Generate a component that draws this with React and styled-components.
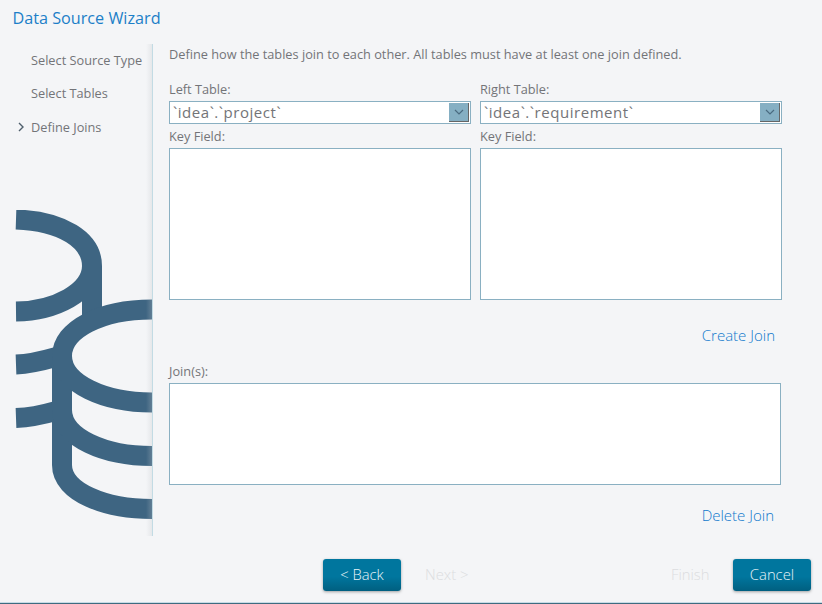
import React from "react";
import styled, { createGlobalStyle } from "styled-components";

const Global = createGlobalStyle`
  html, body { margin: 0; padding: 0; width: 822px; height: 604px; overflow: hidden; background: #f4f5f7; }
  * { box-sizing: border-box; }
`;

const Dialog = styled.div`
  position: relative;
  width: 822px;
  height: 604px;
  background: #f4f5f7;
  font-family: "Open Sans", sans-serif;
  color: #737478;
  font-size: 12.75px;
  display: flex;
  flex-direction: column;
  overflow: hidden;
`;

const Title = styled.h1`
  margin: 0;
  height: 44px;
  padding: 7px 0 0 12.5px;
  font-size: 16.2px;
  line-height: 22px;
  font-weight: 400;
  color: #1c7fc8;
`;

const Body = styled.div`
  display: flex;
  height: 492px;
  flex: none;
`;

const Side = styled.aside`
  position: relative;
  width: 153px;
  flex: none;
  overflow: hidden;
  border-right: 1px solid #c2dbe4;
  &::after {
    content: "";
    position: absolute;
    top: 0;
    right: 0;
    bottom: 0;
    width: 6px;
    background: linear-gradient(to right, rgba(190, 195, 200, 0), rgba(190, 195, 200, 0.28));
  }
`;

const Steps = styled.ul`
  list-style: none;
  margin: 0;
  padding: 4.6px 0 0 31px;
`;

const Step = styled.li`
  position: relative;
  height: 33.5px;
  line-height: 22px;
  white-space: nowrap;
`;

const Caret = styled.svg`
  position: absolute;
  left: -14px;
  top: 6px;
  width: 8px;
  height: 10px;
`;

const Art = styled.svg`
  position: absolute;
  left: 0;
  top: 166px;
  width: 152px;
  height: 310px;
`;

const Main = styled.main`
  flex: 1;
  padding: 0 40px 0 16px;
  display: flex;
  flex-direction: column;
`;

const Intro = styled.p`
  margin: 0;
  height: 36px;
  line-height: 20px;
  white-space: nowrap;
`;

const Columns = styled.div`
  display: grid;
  grid-template-columns: 302px 302px;
  column-gap: 9px;
`;

const Column = styled.div`
  display: flex;
  flex-direction: column;
`;

const Label = styled.label`
  height: 21px;
  line-height: 18px;
  white-space: nowrap;
`;

const Select = styled.div`
  height: 23px;
  background: #fff;
  border: 1px solid #8ab0c2;
  display: flex;
  align-items: center;
  justify-content: space-between;
  padding: 0 1px 0 3px;
  font-size: 15px;
  letter-spacing: 0.55px;
  line-height: 19px;
  color: #737478;
  margin-bottom: 3px;
`;

const Arrow = styled.span`
  width: 20px;
  height: 19px;
  background: #85afc3;
  border-right: 1px solid #666;
  border-bottom: 1px solid #666;
  display: flex;
  align-items: center;
  justify-content: center;
`;

const ListBox = styled.div`
  height: 152px;
  background: #fff;
  border: 1px solid #8ab0c2;
`;

const LinkRow = styled.div`
  height: ${(p) => p.$h}px;
  display: flex;
  align-items: flex-start;
  justify-content: flex-end;
  padding-top: ${(p) => p.$top}px;
  padding-right: ${(p) => p.$pad}px;
`;

const Action = styled.a`
  font-size: 15px;
  font-weight: 300;
  color: #0f78cc;
  line-height: 20px;
`;

const JoinLabel = styled(Label)`
  height: 22px;
  line-height: 20px;
  display: block;
`;

const JoinBox = styled.div`
  width: 612px;
  height: 102px;
  flex: none;
  background: #fff;
  border: 1px solid #8ab0c2;
`;

const Footer = styled.footer`
  flex: 1;
  display: flex;
  align-items: flex-start;
  padding: 23px 11px 0 323px;
  border-bottom: 1px solid #3f6c80;
  box-shadow: inset 0 -1px 0 #c8dbe6;
`;

const Primary = styled.button`
  width: 78px;
  height: 32px;
  border: 0;
  border-radius: 3px;
  background: linear-gradient(#00769e 0 55%, #005f80 100%);
  box-shadow: 0 1px 3px rgba(0, 0, 0, 0.35);
  color: #e8f4f8;
  font: 300 14.8px "Open Sans", sans-serif;
  padding: 0 0 2px;
`;

const Ghost = styled.button`
  border: 0;
  background: none;
  color: #dcdde0;
  font: 300 14.8px "Open Sans", sans-serif;
  height: 32px;
  padding: 0 0 2px;
  margin-left: ${(p) => p.$left}px;
  width: ${(p) => p.$w}px;
  text-align: left;
`;

const Chevron = () => (
  <svg width="10" height="6" viewBox="0 0 10 6" fill="none" stroke="#4a6b80" strokeWidth="1.2">
    <path d="M1 1l4 4 4-4" />
  </svg>
);

export default function App() {
  return (
    <Dialog>
      <Global />
      <Title>Data Source Wizard</Title>
      <Body>
        <Side>
          <Steps>
            <Step>Select Source Type</Step>
            <Step>Select Tables</Step>
            <Step>
              <Caret viewBox="0 0 8 10" fill="none" stroke="#4f5f6c" strokeWidth="1.4">
                <path d="M2 1l4 4-4 4" />
              </Caret>
              Define Joins
            </Step>
          </Steps>
          <Art viewBox="0 210 152 310" fill="none" stroke="#3e6582" strokeWidth="20">
            <path d="M16 219.500C62 221 92 240 92 266C92 292 55 311 16 311.500" />
            <path d="M92 266V320" />
            <path d="M16 364.500C30 364 42 361 56 357" />
            <path d="M16 418C30 417.500 42 415 56 411" />
            <path d="M152 309.500C100 309.500 62 330 62 356V465C62 492 105 509 152 509" />
            <path d="M152 402.500C105 402.500 62 384 62 356" />
            <path d="M152 456C105 456 62 438 62 410" />
          </Art>
        </Side>
        <Main>
          <Intro>Define how the tables join to each other. All tables must have at least one join defined.</Intro>
          <Columns>
            <Column>
              <Label>Left Table:</Label>
              <Select>
                <span>`idea`.`project`</span>
                <Arrow><Chevron /></Arrow>
              </Select>
              <Label>Key Field:</Label>
              <ListBox />
            </Column>
            <Column>
              <Label>Right Table:</Label>
              <Select>
                <span>`idea`.`requirement`</span>
                <Arrow><Chevron /></Arrow>
              </Select>
              <Label>Key Field:</Label>
              <ListBox />
            </Column>
          </Columns>
          <LinkRow $h={61} $top={25} $pad={7}>
            <Action>Create Join</Action>
          </LinkRow>
          <JoinLabel>Join(s):</JoinLabel>
          <JoinBox />
          <LinkRow $h={50} $top={20} $pad={8}>
            <Action>Delete Join</Action>
          </LinkRow>
        </Main>
      </Body>
      <Footer>
        <Primary>&lt; Back</Primary>
        <Ghost $left={24} $w={246}>Next &gt;</Ghost>
        <Ghost $left={0} $w={62}>Finish</Ghost>
        <Primary>Cancel</Primary>
      </Footer>
    </Dialog>
  );
}
